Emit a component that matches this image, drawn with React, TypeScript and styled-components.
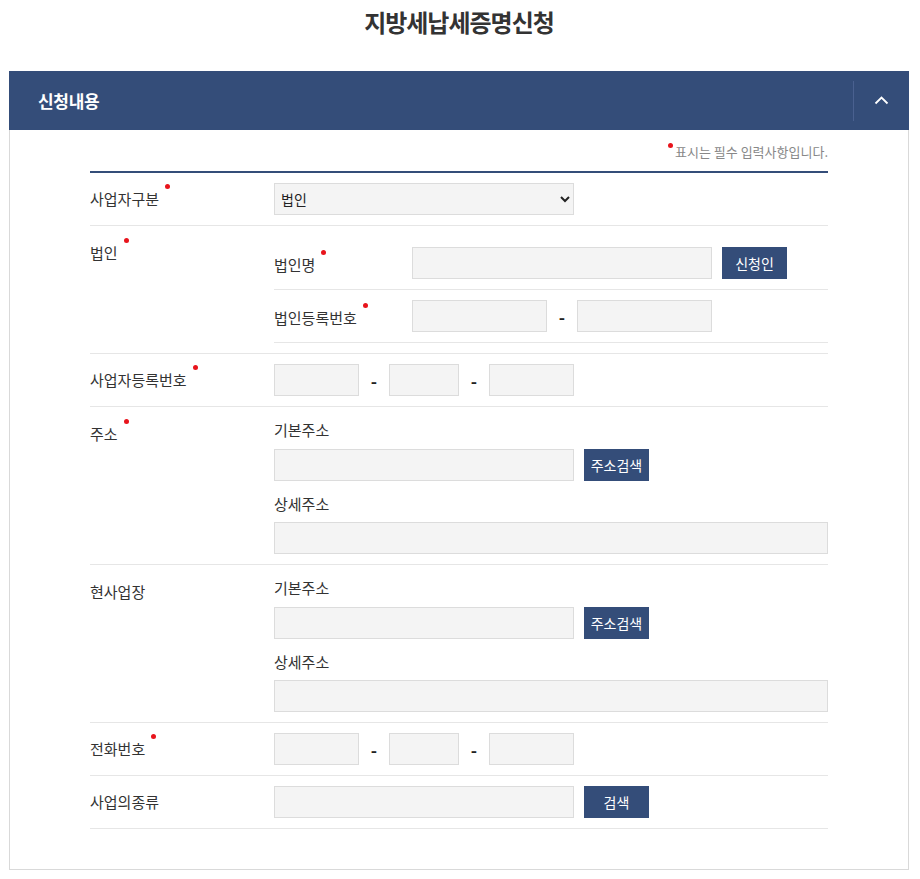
import React from 'react';
import styled, { createGlobalStyle } from 'styled-components';

const NAVY = '#344d79';

const GlobalStyle = createGlobalStyle`
  html, body {
    margin: 0;
    padding: 0;
    background: #fff;
  }
  body {
    font-family: "Noto Sans CJK KR", "Noto Sans", sans-serif;
    color: #333;
  }
`;

const Page = styled.div`
  width: 900px;
  margin-left: 9px;
`;

const Title = styled.h1`
  margin: 0;
  height: 71px;
  padding-top: 6px;
  box-sizing: border-box;
  text-align: center;
  font-size: 24px;
  line-height: 32px;
  font-weight: 700;
  letter-spacing: -1px;
  color: #333;
`;

const Header = styled.div`
  display: flex;
  align-items: center;
  height: 59px;
  background: ${NAVY};
`;

const HeaderTitle = styled.h2`
  flex: 1;
  margin: 0;
  padding-left: 29px;
  color: #fff;
  font-size: 17px;
  font-weight: 700;
  letter-spacing: -0.3px;
`;

const ToggleButton = styled.button`
  width: 56px;
  height: 40px;
  padding: 0;
  border: 0;
  border-left: 1px solid #4a6190;
  background: transparent;
  display: flex;
  align-items: center;
  justify-content: center;
  cursor: pointer;
`;

const Body = styled.div`
  border: 1px solid #d9d9d9;
  border-top: 0;
  padding: 12px 80px 40px;
`;

const Note = styled.p`
  margin: 0 0 9px;
  text-align: right;
  font-size: 13px;
  line-height: 20px;
  color: #888;
`;

const Req = styled.span`
  position: relative;
  display: inline-block;

  &::after {
    content: '';
    position: absolute;
    left: calc(100% + 6px);
    top: -5px;
    width: 5px;
    height: 5px;
    border-radius: 50%;
    background: #e8141c;
  }
`;

const NoteDot = styled.span`
  display: inline-block;
  width: 5px;
  height: 5px;
  margin-right: 2px;
  border-radius: 50%;
  background: #e8141c;
  vertical-align: 9px;
`;

const Form = styled.div`
  border-top: 2px solid ${NAVY};
`;

const Row = styled.div<{ $nested?: boolean }>`
  display: flex;
  align-items: ${p => (p.$nested ? 'flex-start' : 'center')};
  padding: ${p => (p.$nested ? '11px 0 10px' : '10px 0')};
  border-bottom: 1px solid #e6e6e6;
`;

const Label = styled.div<{ $nested?: boolean }>`
  width: 184px;
  flex-shrink: 0;
  font-size: 15px;
  line-height: 20px;
  padding-top: ${p => (p.$nested ? '6px' : '0')};
  color: #333;
`;

const Field = styled.div`
  flex: 1;
  display: flex;
  align-items: center;
  gap: 10px;
`;

const Stack = styled.div`
  flex: 1;
  display: flex;
  flex-direction: column;
`;

const SubRow = styled.div`
  display: flex;
  align-items: center;
  padding: 10px 0;
  border-bottom: 1px solid #e6e6e6;
`;

const SubLabel = styled.div`
  width: 138px;
  flex-shrink: 0;
  font-size: 15px;
  line-height: 20px;
  padding-top: 3px;
`;

const SubHeading = styled.div<{ $second?: boolean }>`
  font-size: 15px;
  line-height: 24px;
  margin: ${p => (p.$second ? '11px 0 6px' : '0 0 7px')};
`;

const Input = styled.input<{ $w?: number }>`
  box-sizing: border-box;
  height: 32px;
  width: ${p => (p.$w ? `${p.$w}px` : '100%')};
  flex-shrink: 0;
  margin: 0;
  padding: 0 6px;
  border: 1px solid #dcdcdc;
  background: #f4f4f4;
  font: inherit;
  font-size: 14px;
  outline: none;
`;

const Select = styled.select`
  box-sizing: border-box;
  width: 300px;
  height: 32px;
  margin: 0;
  padding: 0 2px;
  border: 1px solid #dcdcdc;
  border-radius: 0;
  background: #f4f4f4;
  font-family: inherit;
  font-size: 14px;
  color: #222;
`;

const Dash = styled.span`
  width: 30px;
  margin: 0 -10px;
  text-align: center;
  font-size: 17px;
  font-weight: 700;
  color: #222;
`;

const NavyButton = styled.button`
  box-sizing: border-box;
  width: 65px;
  height: 32px;
  flex-shrink: 0;
  padding: 0;
  border: 0;
  background: ${NAVY};
  color: #fff;
  font-family: inherit;
  font-size: 14px;
  cursor: pointer;
`;

const Chevron = () => (
  <svg width="15" height="9" viewBox="0 0 15 9" fill="none">
    <polyline points="1.5,7.5 7.5,1.5 13.5,7.5" stroke="#fff" strokeWidth="1.8" />
  </svg>
);

const AddressField = () => (
  <Stack>
    <SubHeading>기본주소</SubHeading>
    <Field>
      <Input $w={300} />
      <NavyButton>주소검색</NavyButton>
    </Field>
    <SubHeading $second>상세주소</SubHeading>
    <Input />
  </Stack>
);

const PhoneLike = () => (
  <Field>
    <Input $w={85} />
    <Dash>-</Dash>
    <Input $w={70} />
    <Dash>-</Dash>
    <Input $w={85} />
  </Field>
);

export default function App() {
  return (
    <Page>
      <GlobalStyle />
      <Title>지방세납세증명신청</Title>
      <Header>
        <HeaderTitle>신청내용</HeaderTitle>
        <ToggleButton aria-label="접기">
          <Chevron />
        </ToggleButton>
      </Header>
      <Body>
        <Note>
          <NoteDot />
          표시는 필수 입력사항입니다.
        </Note>
        <Form>
          <Row>
            <Label>
              <Req>사업자구분</Req>
            </Label>
            <Field>
              <Select defaultValue="법인">
                <option value="법인">법인</option>
                <option value="개인">개인</option>
              </Select>
            </Field>
          </Row>

          <Row $nested>
            <Label $nested>
              <Req>법인</Req>
            </Label>
            <Stack>
              <SubRow>
                <SubLabel>
                  <Req>법인명</Req>
                </SubLabel>
                <Field>
                  <Input $w={300} />
                  <NavyButton>신청인</NavyButton>
                </Field>
              </SubRow>
              <SubRow>
                <SubLabel>
                  <Req>법인등록번호</Req>
                </SubLabel>
                <Field>
                  <Input $w={135} />
                  <Dash>-</Dash>
                  <Input $w={135} />
                </Field>
              </SubRow>
            </Stack>
          </Row>

          <Row>
            <Label>
              <Req>사업자등록번호</Req>
            </Label>
            <PhoneLike />
          </Row>

          <Row $nested>
            <Label $nested>
              <Req>주소</Req>
            </Label>
            <AddressField />
          </Row>

          <Row $nested>
            <Label $nested>현사업장</Label>
            <AddressField />
          </Row>

          <Row>
            <Label>
              <Req>전화번호</Req>
            </Label>
            <PhoneLike />
          </Row>

          <Row>
            <Label>사업의종류</Label>
            <Field>
              <Input $w={300} />
              <NavyButton>검색</NavyButton>
            </Field>
          </Row>
        </Form>
      </Body>
    </Page>
  );
}
